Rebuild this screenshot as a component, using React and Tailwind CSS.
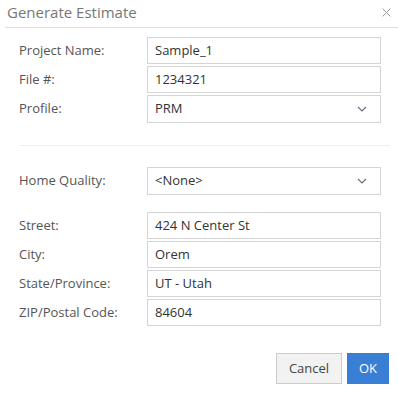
import React from 'react';

function Chevron() {
  return (
    <svg width="10" height="6" viewBox="0 0 10 6" className="text-gray-500">
      <path d="M1 1l4 4 4-4" fill="none" stroke="currentColor" strokeWidth="1.2" />
    </svg>
  );
}

function Field({ label, value, select }) {
  return (
    <div className="flex items-center">
      <label className="w-[128px] text-[13px] text-[#555]">{label}</label>
      <div
        className={`flex-1 flex items-center justify-between border border-[#d5d5d5] bg-white pl-[7px] pr-[13px] text-[13px] text-[#333] ${
          select ? 'h-[28px]' : 'h-[27px]'
        }`}
      >
        <span>{value}</span>
        {select && <Chevron />}
      </div>
    </div>
  );
}

export default function App() {
  return (
    <div className="w-[398px] h-[396px] bg-white" style={{ fontFamily: '"Open Sans", sans-serif' }}>
      <div className="ml-[5px] h-[28px] flex items-center justify-between border-b border-[#dedede] pl-[2px] pr-[7px]">
        <span className="text-[15px] text-[#777] mt-[-2px]">Generate Estimate</span>
        <svg width="9" height="9" viewBox="0 0 9 9" className="text-[#999] mt-[-2px]">
          <path d="M0.5 0.5l8 8M8.5 0.5l-8 8" stroke="currentColor" strokeWidth="1" />
        </svg>
      </div>

      <div className="pl-[19px] pr-[17px] pt-[9px]">
        <div className="flex flex-col gap-[2px]">
          <Field label="Project Name:" value="Sample_1" />
          <Field label="File #:" value="1234321" />
          <Field label="Profile:" value="PRM" select />
        </div>

        <div className="mt-[22px] mr-[-9px] border-t border-[#eee]" />

        <div className="mt-[21px]">
          <Field label="Home Quality:" value="<None>" select />
        </div>

        <div className="mt-[17px] flex flex-col gap-[2px]">
          <Field label="Street:" value="424 N Center St" />
          <Field label="City:" value="Orem" />
          <Field label="State/Province:" value="UT - Utah" />
          <Field label="ZIP/Postal Code:" value="84604" />
        </div>

        <div className="mt-[27px] mr-[-8px] flex justify-end gap-[5px]">
          <button className="h-[31px] w-[66px] border border-[#ccc] bg-[#f2f2f2] text-[13px] text-[#444]">
            Cancel
          </button>
          <button className="h-[31px] w-[42px] border border-[#3a7bd5] bg-[#3a7fd6] text-[13px] text-white">
            OK
          </button>
        </div>
      </div>
    </div>
  );
}
